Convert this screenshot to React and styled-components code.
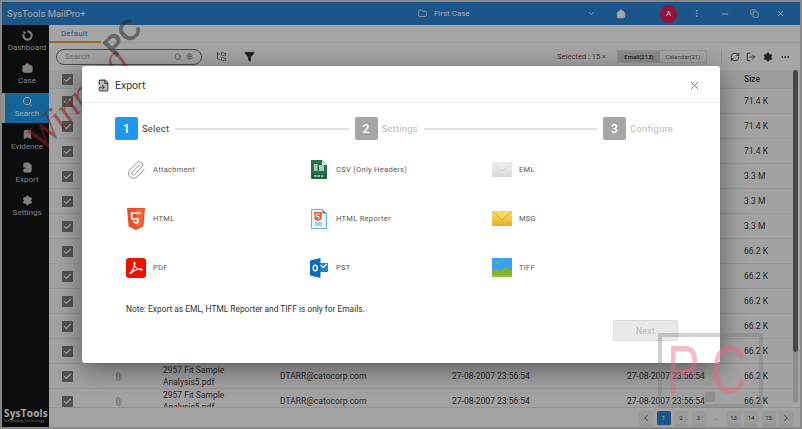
import styled, { createGlobalStyle } from 'styled-components'
import {
  Briefcase, Search, Bookmark, FileSymlink, Settings, RefreshCw, LogOut, MoreHorizontal, MoreVertical,
  Filter, Home, Folder, Minus, Copy, X, ChevronLeft, ChevronRight, ChevronDown, Paperclip, FolderTree, Check,
} from 'lucide-react'

const GlobalStyle = createGlobalStyle`
  html, body { margin: 0; padding: 0; width: 802px; height: 429px; overflow: hidden; }
  body { background: #d0d0d0; font-family: Roboto, "Liberation Sans", sans-serif; }
  * { box-sizing: border-box; }
`

const Frame = styled.div`
  position: relative;
  width: 802px;
  height: 429px;
  padding: 2px;
  overflow: hidden;
`

const Shell = styled.div`
  display: flex;
  flex-direction: column;
  height: 100%;
  background: #fff;
`

const TopBar = styled.header`
  display: flex;
  align-items: center;
  height: 23px;
  flex: none;
  background: #2b83d4;
  color: #fff;
  font-size: 9.5px;
  padding-left: 5px;
`

const AppName = styled.div`
  width: 420px;
`

const CaseName = styled.div`
  display: flex;
  align-items: center;
  gap: 7px;
  width: 172px;
  font-size: 8px;
`

const BarIcon = styled.div`
  display: flex;
  justify-content: center;
  width: ${p => p.$w}px;
`

const Avatar = styled.div`
  display: flex;
  align-items: center;
  justify-content: center;
  width: 18px;
  height: 18px;
  margin: 0 14px 0 13px;
  border-radius: 50%;
  background: #e0205f;
  font-size: 8px;
  font-weight: 500;
`

const Body = styled.div`
  display: flex;
  flex: 1;
  min-height: 0;
`

const Sidebar = styled.nav`
  display: flex;
  flex-direction: column;
  gap: 3px;
  width: 47px;
  flex: none;
  padding-top: 2px;
  background: #141416;
`

const NavItem = styled.div`
  display: flex;
  flex-direction: column;
  align-items: center;
  height: 30px;
  padding-top: 3px;
  gap: 2px;
  font-size: 8px;
  color: ${p => (p.$active ? '#fff' : '#c4c4c4')};
  background: ${p => (p.$active ? '#1f9ae8' : 'transparent')};
  border-left: 3px solid ${p => (p.$active ? '#e0e0e0' : 'transparent')};
`

const Logo = styled.div`
  margin-top: auto;
  padding: 0 0 4px 2px;
  color: #fff;
  font-family: "Open Sans", sans-serif;
  font-weight: 700;
  font-size: 10px;
  line-height: 10px;
  letter-spacing: 0.2px;
  span {
    display: block;
    font-size: 3.6px;
    line-height: 5px;
    font-weight: 400;
    letter-spacing: 0.1px;
    color: #bbb;
  }
`

const Main = styled.main`
  display: flex;
  flex-direction: column;
  flex: 1;
  min-width: 0;
  background: #fdfdfd;
`

const TabStrip = styled.div`
  display: flex;
  height: 18px;
  flex: none;
  border-bottom: 1px solid #eee;
`

const Tab = styled.div`
  width: 52px;
  height: 18px;
  padding: 4px 0 0 12px;
  border-bottom: 2px solid #e8a33c;
  color: #2b83d4;
  font-size: 7.5px;
  letter-spacing: 0.4px;
`

const Toolbar = styled.div`
  display: flex;
  align-items: center;
  height: 27px;
  flex: none;
  padding-left: 7px;
  color: #333;
`

const SearchPill = styled.div`
  display: flex;
  align-items: center;
  gap: 4px;
  width: 146px;
  height: 16px;
  padding: 0 8px;
  margin-right: 14px;
  border: 1px solid #777;
  border-radius: 9px;
  color: #aaa;
  font-size: 8px;
  span { flex: 1; }
`

const ToolIcon = styled.div`
  display: flex;
  margin-left: ${p => p.$gap || 0}px;
`

const Selected = styled.div`
  margin-left: auto;
  margin-right: 11px;
  font-size: 7.5px;
  color: #666;
`

const Segment = styled.div`
  display: flex;
  height: 13px;
  border: 1px solid #e4e4e4;
`

const SegmentItem = styled.div`
  display: flex;
  align-items: center;
  justify-content: center;
  width: ${p => p.$w}px;
  font-size: 6px;
  font-weight: ${p => (p.$on ? 500 : 400)};
  background: ${p => (p.$on ? '#d6d6d6' : 'transparent')};
  color: ${p => (p.$on ? '#333' : '#666')};
`

const ToolDivider = styled.div`
  width: 1px;
  height: 15px;
  margin: 0 8px 0 14px;
  background: #ddd;
`

const TableWrap = styled.div`
  display: flex;
  flex: 1;
  min-height: 0;
  overflow: hidden;
`

const Rows = styled.div`
  flex: 1;
  min-width: 0;
`

const Row = styled.div`
  display: grid;
  grid-template-columns: 36px 78px 117px 172px 175px 117px 1fr;
  align-items: center;
  height: ${p => (p.$head ? 19 : 25)}px;
  border-bottom: 1px solid #e8e8e8;
  background: ${p => (p.$head ? '#f2f2f2' : '#f9f9f9')};
  color: #3c3c3c;
  font-size: 8.5px;
  line-height: 12px;
  font-weight: ${p => (p.$head ? 500 : 400)};
`

const CheckBox = styled.div`
  display: flex;
  align-items: center;
  justify-content: center;
  width: 11px;
  height: 11px;
  margin-left: 13px;
  border-radius: 1px;
  background: #7e7e7e;
  color: #fff;
`

const ClipCell = styled.div`
  display: flex;
  padding-left: 29px;
  color: #aaa;
  svg { transform: rotate(-45deg); }
`

const NameCell = styled.div`
  max-width: 84px;
`

const ScrollTrack = styled.div`
  width: 5px;
  margin: 0 2px 4px 0;
  border-radius: 3px;
  background: #dcdcdc;
  flex: none;
`

const ScrollThumb = styled.div`
  height: 282px;
  border-radius: 3px;
  background: #6f6f6f;
`

const Pager = styled.footer`
  display: flex;
  align-items: center;
  justify-content: flex-end;
  gap: 3.5px;
  height: 20px;
  flex: none;
  padding-right: 7px;
  border-top: 1px solid #e2e2e2;
  background: #fafafa;
`

const PageBtn = styled.div`
  display: flex;
  align-items: center;
  justify-content: center;
  width: 14px;
  height: 14px;
  border-radius: 2px;
  font-size: 6px;
  color: ${p => (p.$on ? '#fff' : '#444')};
  background: ${p => (p.$on ? '#2b83d4' : p.$plain ? 'transparent' : '#eeeeee')};
  box-shadow: ${p => (p.$plain ? 'none' : '0 1px 1px rgba(0,0,0,.15)')};
`

const Overlay = styled.div`
  position: absolute;
  inset: 0;
  display: flex;
  align-items: center;
  justify-content: center;
  background: rgba(0, 0, 0, 0.35);
`

const Modal = styled.section`
  display: flex;
  flex-direction: column;
  width: 638px;
  height: 297px;
  border-radius: 3px;
  background: #fff;
  box-shadow: 0 6px 26px rgba(0, 0, 0, 0.45);
`

const ModalHead = styled.div`
  display: flex;
  align-items: center;
  gap: 5px;
  height: 37px;
  flex: none;
  padding: 3px 19px 0 15px;
  border-bottom: 1px solid #ececec;
  color: #333;
  font-size: 10.5px;
  span { flex: 1; }
`

const ModalBody = styled.div`
  display: flex;
  flex-direction: column;
  flex: 1;
  padding: 14px 42px 0 33px;
`

const Stepper = styled.div`
  display: flex;
  align-items: center;
  width: 558px;
  height: 23px;
  flex: none;
`

const StepNum = styled.div`
  display: flex;
  align-items: center;
  justify-content: center;
  width: 23px;
  height: 23px;
  flex: none;
  border-radius: 2px;
  color: #fff;
  font-size: 12px;
  font-weight: 500;
  background: ${p => (p.$on ? '#2196f3' : '#a6a6a6')};
`

const StepLabel = styled.div`
  margin-left: 4px;
  font-size: 9.5px;
  letter-spacing: 0.2px;
  color: ${p => (p.$on ? '#444' : '#bbb')};
`

const StepLine = styled.div`
  flex: 1;
  height: 2px;
  margin: 0 6px;
  background: #e2e2e2;
`

const FormatGrid = styled.div`
  display: grid;
  grid-template-columns: repeat(3, 183px);
  grid-auto-rows: 49px;
  margin-top: 5px;
  padding-left: 11px;
`

const Format = styled.div`
  display: flex;
  align-items: center;
  gap: 7px;
  color: #555;
  font-size: 7.5px;
  letter-spacing: 0.3px;
`

const FormatIcon = styled.div`
  display: flex;
  align-items: center;
  justify-content: center;
  width: 20px;
  height: 22px;
  flex: none;
`

const Note = styled.div`
  margin-top: 11px;
  padding-left: 11px;
  height: 12px;
  color: #333;
  font-size: 8.4px;
  line-height: 12px;
`

const NextButton = styled.div`
  display: flex;
  align-items: center;
  justify-content: center;
  align-self: flex-end;
  width: 65px;
  height: 21px;
  margin-top: 5px;
  border: 1px solid #dcdcdc;
  border-radius: 2px;
  background: #e8e8e8;
  color: #b4b4b4;
  font-size: 8.5px;
  letter-spacing: 0.4px;
`

const WinningMark = styled.div`
  position: absolute;
  left: 13px;
  top: 79px;
  transform: rotate(-46deg);
  color: rgba(225, 40, 50, 0.55);
  font-family: "Liberation Serif", serif;
  font-style: italic;
  font-size: 38px;
  line-height: 38px;
`

const PcMark = styled.div`
  position: absolute;
  left: 102px;
  top: 21px;
  transform: rotate(-45deg);
  color: rgba(70, 70, 70, 0.55);
  font-family: "Liberation Sans", sans-serif;
  font-weight: 700;
  font-size: 29px;
  line-height: 32px;
`

const PcStamp = styled.div`
  position: absolute;
  left: 658px;
  top: 333px;
  display: flex;
  align-items: center;
  width: 105px;
  height: 75px;
  padding: 0 0 4px 5px;
  border: 4px solid rgba(120, 120, 120, 0.35);
  overflow: hidden;
`

const StampText = styled.span`
  display: inline-block;
  transform: scaleX(0.72);
  transform-origin: left center;
  color: rgba(240, 100, 130, 0.45);
  font-family: "Liberation Sans", sans-serif;
  font-size: 68px;
  line-height: 68px;
  letter-spacing: 16px;
  white-space: nowrap;
`

const StampDot = styled.div`
  position: absolute;
  left: 705px;
  top: 392px;
  width: 10px;
  height: 10px;
  border-radius: 1px;
  background: #8f8f8f;
`

const IconDashboard = () => (
  <svg width="11" height="11" viewBox="0 0 12 12">
    <path d="M6 1.500a4.500 4.500 0 1 1-4.200 3" fill="none" stroke="#c4c4c4" strokeWidth="2.200" />
    <path d="M.8 1.500l3.700.4-1.500 3z" fill="#c4c4c4" />
  </svg>
)

const IconHtml5 = () => (
  <svg width="18" height="22" viewBox="0 0 18 22">
    <path d="M0 0h18l-1.600 18.500L9 22l-7.400-3.500z" fill="#e8502a" />
    <path d="M9 1.500h7.300l-1.300 15.600L9 20z" fill="#f4693a" />
    <path d="M13.500 5H4.500l.4 6h6l-.2 3.200L9 15l-1.800-.8-.1-1.400" fill="none" stroke="#fff" strokeWidth="1.700" />
  </svg>
)

const IconPdf = () => (
  <svg width="20" height="20" viewBox="0 0 20 20">
    <rect width="20" height="20" rx="3" fill="#f00f00" />
    <path d="M3.500 15.500c2-1 4-4.500 5.500-10 .3-1.500-1.200-1.500-1 0 .5 3 3 6 8 6.500 1 0-.5-1.500-3-1-3 .5-6 2-8.500 4.500z" fill="none" stroke="#fff" strokeWidth="1.200" />
  </svg>
)

const IconCsv = () => (
  <svg width="16" height="19" viewBox="0 0 16 19">
    <path d="M0 0h11l5 5v14H0z" fill="#217346" />
    <path d="M11 0l5 5h-5z" fill="#d5e6dc" />
    <rect x="3" y="4" width="3.500" height="7" fill="#a9cbb6" />
    <rect x="8" y="5" width="5" height="6" fill="#a9cbb6" />
    <rect x="1" y="14" width="14" height="4" fill="#17593a" />
    <path d="M3 16h10" stroke="#cfe3d6" strokeWidth="1.500" strokeDasharray="2.500 1" />
  </svg>
)

const IconReporter = () => (
  <svg width="16" height="20" viewBox="0 0 16 20">
    <path d="M.5.500h11l4 4v15H.5z" fill="#eaf5fc" stroke="#62b3e4" />
    <path d="M11.500.5l4 4h-4z" fill="#2a8fd0" />
    <path d="M3 3h8l-.7 7.500L7 12l-3.300-1.500z" fill="#ea5a2c" />
    <path d="M9 5H5l.2 2.500h3l-.2 2-1 .4" fill="none" stroke="#fff" strokeWidth=".9" />
    <rect x="4" y="13" width="7" height="4" fill="#a8cde6" />
  </svg>
)

const IconPst = () => (
  <svg width="18" height="20" viewBox="0 0 18 20">
    <path d="M8 5h10v9H8z" fill="#1b86d6" />
    <path d="M9 6l4 3.500L17 6" fill="none" stroke="#fff" strokeWidth="1.200" />
    <path d="M0 2.500L10.500 0v20L0 17.500z" fill="#0a6cc0" />
    <ellipse cx="5.200" cy="10" rx="2" ry="2.800" fill="none" stroke="#fff" strokeWidth="1.400" />
  </svg>
)

const IconEnvelope = ({ from, to, flap, edge }) => {
  const id = `env-${from.slice(1)}`
  return (
    <svg width="20" height="15" viewBox="0 0 20 15">
      <defs>
        <linearGradient id={id} x1="0" y1="0" x2="0" y2="1">
          <stop offset="0" stopColor={from} />
          <stop offset="1" stopColor={to} />
        </linearGradient>
      </defs>
      <rect width="20" height="15" rx="1" fill={`url(#${id})`} />
      <path d="M.5.500L10 9l9.500-8.500" fill={flap} stroke={edge} strokeWidth=".8" />
    </svg>
  )
}

const IconImage = () => (
  <svg width="20" height="19" viewBox="0 0 20 19">
    <rect width="20" height="19" fill="#37a1f4" />
    <circle cx="5" cy="4.500" r="1.500" fill="#7fb32a" />
    <path d="M0 17v-4c2-3 5-3 7 0 1-1 2-1 3 0 1-4 6-5 8-1l2 1v4z" fill="#7fb32a" />
    <rect y="17" width="20" height="2" fill="#8cc63a" />
  </svg>
)

const nav = [
  { label: 'Dashboard', Icon: IconDashboard },
  { label: 'Case', Icon: Briefcase },
  { label: 'Search', Icon: Search, active: true },
  { label: 'Evidence', Icon: Bookmark },
  { label: 'Export', Icon: FileSymlink },
  { label: 'Settings', Icon: Settings },
]

const formats = [
  { label: 'Attachment', icon: <Paperclip size={20} strokeWidth={1.1} color="#8a8a8a" /> },
  { label: 'CSV (Only Headers)', icon: <IconCsv /> },
  { label: 'EML', icon: <IconEnvelope from="#f0f0f0" to="#d8d8d8" flap="#ececec" edge="#cfcfcf" /> },
  { label: 'HTML', icon: <IconHtml5 /> },
  { label: 'HTML Reporter', icon: <IconReporter /> },
  { label: 'MSG', icon: <IconEnvelope from="#fbe27a" to="#e8ae1e" flap="#f8d858" edge="#c9951c" /> },
  { label: 'PDF', icon: <IconPdf /> },
  { label: 'PST', icon: <IconPst /> },
  { label: 'TIFF', icon: <IconImage /> },
]

// only the last two rows stick out below the dialog, the rest just show the size column
const rows = [
  { size: '71.4 K' }, { size: '71.4 K' }, { size: '71.4 K' },
  { size: '3.3 M' }, { size: '3.3 M' }, { size: '3.3 M' },
  { size: '66.2 K' }, { size: '66.2 K' }, { size: '66.2 K' }, { size: '66.2 K' }, { size: '66.2 K' },
  { size: '66.2 K', name: '2957 Fit Sample Analysis5.pdf', from: 'DTARR@catocorp.com', date: '27-08-2007 23:56:54' },
  { size: '66.2 K', name: '2957 Fit Sample Analysis5.pdf', from: 'DTARR@catocorp.com', date: '27-08-2007 23:56:54' },
]

const pages = ['1', '2', '3', '...', '13', '14', '15']

const App = () => {
  return (
    <Frame>
      <GlobalStyle />
      <Shell>
        <TopBar>
          <AppName>SysTools MailPro+</AppName>
          <CaseName><Folder size={9} />First Case</CaseName>
          <BarIcon $w={10}><ChevronDown size={9} /></BarIcon>
          <BarIcon $w={52}><Home size={10} fill="#fff" /></BarIcon>
          <Avatar>A</Avatar>
          <BarIcon $w={10}><MoreVertical size={9} /></BarIcon>
          <BarIcon $w={49}><Minus size={10} /></BarIcon>
          <BarIcon $w={12}><Copy size={9} /></BarIcon>
          <BarIcon $w={40}><X size={9} /></BarIcon>
        </TopBar>
        <Body>
          <Sidebar>
            {nav.map(({ label, Icon, active }) => (
              <NavItem key={label} $active={active}>
                <Icon size={11} fill={active ? 'none' : '#c4c4c4'} />
                {label}
              </NavItem>
            ))}
            <Logo>SysTools<span>Simplifying Technology</span></Logo>
          </Sidebar>
          <Main>
            <TabStrip><Tab>Default</Tab></TabStrip>
            <Toolbar>
              <SearchPill>
                <span>Search</span>
                <Search size={8} color="#666" />
                <Settings size={7} color="#555" />
              </SearchPill>
              <ToolIcon><FolderTree size={11} strokeWidth={1.4} /></ToolIcon>
              <ToolIcon $gap={17}><Filter size={11} fill="#333" /></ToolIcon>
              <Selected>Selected : 15 ×</Selected>
              <Segment>
                <SegmentItem $on $w={42}>Email(213)</SegmentItem>
                <SegmentItem $w={46}>Calendar(21)</SegmentItem>
              </Segment>
              <ToolDivider />
              <ToolIcon><RefreshCw size={10} /></ToolIcon>
              <ToolIcon $gap={6}><LogOut size={10} /></ToolIcon>
              <ToolIcon $gap={7}><Settings size={10} fill="#333" /></ToolIcon>
              <ToolIcon $gap={7}><MoreHorizontal size={10} /></ToolIcon>
              <ToolIcon $gap={10} />
            </Toolbar>
            <TableWrap>
              <Rows>
                <Row $head>
                  <CheckBox><Check size={9} strokeWidth={3} /></CheckBox>
                  <div />
                  <div />
                  <div />
                  <div />
                  <div />
                  <div>Size</div>
                </Row>
                {rows.map((row, i) => (
                  <Row key={i}>
                    <CheckBox><Check size={9} strokeWidth={3} /></CheckBox>
                    <ClipCell>{row.name && <Paperclip size={9} />}</ClipCell>
                    <NameCell>{row.name}</NameCell>
                    <div>{row.from}</div>
                    <div>{row.date}</div>
                    <div>{row.date}</div>
                    <div>{row.size}</div>
                  </Row>
                ))}
              </Rows>
              <ScrollTrack><ScrollThumb /></ScrollTrack>
            </TableWrap>
            <Pager>
              <PageBtn><ChevronLeft size={10} /></PageBtn>
              {pages.map(p => (
                <PageBtn key={p} $on={p === '1'} $plain={p === '...'}>{p}</PageBtn>
              ))}
              <PageBtn><ChevronRight size={10} /></PageBtn>
            </Pager>
          </Main>
        </Body>
      </Shell>
      <WinningMark>Winning</WinningMark>
      <PcMark>PC</PcMark>
      <Overlay>
        <Modal>
          <ModalHead>
            <FileSymlink size={13} color="#444" fill="#bbb" />
            <span>Export</span>
            <X size={13} strokeWidth={1.2} color="#444" />
          </ModalHead>
          <ModalBody>
            <Stepper>
              <StepNum $on>1</StepNum>
              <StepLabel $on>Select</StepLabel>
              <StepLine />
              <StepNum>2</StepNum>
              <StepLabel>Settings</StepLabel>
              <StepLine />
              <StepNum>3</StepNum>
              <StepLabel>Configure</StepLabel>
            </Stepper>
            <FormatGrid>
              {formats.map(f => (
                <Format key={f.label}>
                  <FormatIcon>{f.icon}</FormatIcon>
                  {f.label}
                </Format>
              ))}
            </FormatGrid>
            <Note>Note: Export as EML, HTML Reporter and TIFF is only for Emails.</Note>
            <NextButton>Next</NextButton>
          </ModalBody>
        </Modal>
      </Overlay>
      <PcStamp><StampText>PC</StampText></PcStamp>
      <StampDot />
    </Frame>
  )
}

export default App
